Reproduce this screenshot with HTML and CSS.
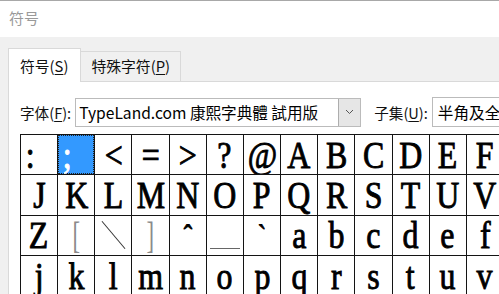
FILE: index.html
```html
<!DOCTYPE html>
<html lang="zh-CN">
<head>
  <meta charset="UTF-8">
  <title>符号</title>
  <link rel="stylesheet" href="styles.css">
</head>
<body>
  <div class="titlebar">符号</div>

  <div class="tabs">
    <div class="tab active">符号(<u>S</u>)</div>
    <div class="tab">特殊字符(<u>P</u>)</div>
  </div>

  <div class="panel">
    <div class="font-row">
      <span class="label">字体(<u>F</u>):</span>
      <div class="combo">
        <span class="combo-text">TypeLand.com 康熙字典體 試用版</span>
        <span class="combo-btn">
          <svg width="9" height="6" viewBox="0 0 9 6"><path d="M1 1 L4.5 4.5 L8 1" fill="none" stroke="#555" stroke-width="1"/></svg>
        </span>
      </div>
      <span class="label subset-label">子集(<u>U</u>):</span>
      <div class="subset">半角及全角字符</div>
    </div>

    <div class="grid">
      <div class="cell l"><span>:</span></div>
      <div class="cell l selected"><span>;</span></div>
      <div class="cell"><span>&lt;</span></div>
      <div class="cell"><span>=</span></div>
      <div class="cell"><span>&gt;</span></div>
      <div class="cell"><span>?</span></div>
      <div class="cell"><span>@</span></div>
      <div class="cell"><span>A</span></div>
      <div class="cell"><span>B</span></div>
      <div class="cell"><span>C</span></div>
      <div class="cell"><span>D</span></div>
      <div class="cell"><span>E</span></div>
      <div class="cell"><span>F</span></div>
      <div class="cell"><span>G</span></div>
      <div class="cell"><span>H</span></div>
      <div class="cell"><span>I</span></div>

      <div class="cell"><span>J</span></div>
      <div class="cell"><span>K</span></div>
      <div class="cell"><span>L</span></div>
      <div class="cell"><span>M</span></div>
      <div class="cell"><span>N</span></div>
      <div class="cell"><span>O</span></div>
      <div class="cell"><span>P</span></div>
      <div class="cell"><span>Q</span></div>
      <div class="cell"><span>R</span></div>
      <div class="cell"><span>S</span></div>
      <div class="cell"><span>T</span></div>
      <div class="cell"><span>U</span></div>
      <div class="cell"><span>V</span></div>
      <div class="cell"><span>W</span></div>
      <div class="cell"><span>X</span></div>
      <div class="cell"><span>Y</span></div>

      <div class="cell"><span>Z</span></div>
      <div class="cell thin"><span>[</span></div>
      <div class="cell"><i class="slash"></i></div>
      <div class="cell thin"><span>]</span></div>
      <div class="cell caret"><span>ˆ</span></div>
      <div class="cell"><i class="under"></i></div>
      <div class="cell caret"><span>`</span></div>
      <div class="cell"><span>a</span></div>
      <div class="cell"><span>b</span></div>
      <div class="cell"><span>c</span></div>
      <div class="cell"><span>d</span></div>
      <div class="cell"><span>e</span></div>
      <div class="cell"><span>f</span></div>
      <div class="cell"><span>g</span></div>
      <div class="cell"><span>h</span></div>
      <div class="cell"><span>i</span></div>

      <div class="cell"><span>j</span></div>
      <div class="cell"><span>k</span></div>
      <div class="cell"><span>l</span></div>
      <div class="cell"><span>m</span></div>
      <div class="cell"><span>n</span></div>
      <div class="cell"><span>o</span></div>
      <div class="cell"><span>p</span></div>
      <div class="cell"><span>q</span></div>
      <div class="cell"><span>r</span></div>
      <div class="cell"><span>s</span></div>
      <div class="cell"><span>t</span></div>
      <div class="cell"><span>u</span></div>
      <div class="cell"><span>v</span></div>
      <div class="cell"><span>w</span></div>
      <div class="cell"><span>x</span></div>
      <div class="cell"><span>y</span></div>
    </div>
  </div>
</body>
</html>
```

FILE: styles.css
```css
body {
  margin: 0;
  background-color: #f0f0f0;
  font-family: "Noto Sans CJK SC", "Noto Sans", sans-serif;
  overflow: hidden;
  width: 499px;
  height: 294px;
}
u {
  text-decoration-thickness: 1px;
  text-underline-offset: 2px;
}
.titlebar {
  height: 36px;
  background-color: white;
  border-top: 1px solid #a8a8a8;
  color: #9a9a9a;
  font-size: 15px;
  line-height: 34px;
  padding-left: 9px;
}
.tabs {
  display: flex;
  align-items: flex-end;
  padding: 11px 0 0 8px;
  height: 33px;
}
.tab {
  font-size: 14.8px;
  height: 29px;
  line-height: 28px;
  padding: 0 10px 0 10px;
  border: 1px solid #d9d9d9;
  border-bottom: none;
  border-left: none;
  background-color: #f0f0f0;
  color: #111;
}
.tab.active {
  height: 33px;
  line-height: 33px;
  background-color: white;
  border-left: 1px solid #d9d9d9;
  padding: 0 12px 0 11px;
  position: relative;
  top: 1px;
}
.panel {
  margin-left: 8px;
  background-color: white;
  border-top: 1px solid #d9d9d9;
  border-left: 1px solid #d9d9d9;
  height: 300px;
  padding: 15px 0 0 11px;
}
.font-row {
  display: flex;
  align-items: center;
  height: 30px;
  white-space: nowrap;
}
.font-row > * {
  flex: none;
}
.label {
  font-size: 14.6px;
  color: #111;
  margin-right: 4px;
}
.combo {
  display: flex;
  width: 286px;
  height: 29px;
  border: 1px solid #bbb;
  box-sizing: border-box;
}
.combo-text {
  flex: 1;
  font-size: 15.6px;
  line-height: 27px;
  padding-left: 3px;
  color: #000;
  overflow: hidden;
}
.combo-btn {
  width: 21px;
  background-color: #e6e6e6;
  border-left: 1px solid #adadad;
  display: flex;
  align-items: center;
  justify-content: center;
}
.subset-label {
  margin-left: 13px;
}
.subset {
  height: 30px;
  box-sizing: border-box;
  border: 1px solid #bbb;
  border-right: none;
  font-size: 15.6px;
  line-height: 28px;
  padding-left: 5px;
  color: #000;
  width: 120px;
  overflow: hidden;
}
.grid {
  display: grid;
  grid-template-columns: repeat(16, 36.17px);
  grid-auto-rows: 39.33px;
  gap: 1px;
  background-color: #141414;
  border: 1px solid #141414;
  width: max-content;
  margin-top: 7px;
}
.cell {
  background-color: white;
  display: flex;
  align-items: center;
  justify-content: center;
  font-family: "Liberation Serif", serif;
  font-size: 38px;
  color: #000;
  overflow: hidden;
  line-height: 1;
}
.cell span {
  display: inline-block;
  transform: scaleX(0.84);
  -webkit-text-stroke: 0.9px currentColor;
}
.cell.l {
  justify-content: flex-start;
  padding-left: 4px;
}
.cell.selected {
  background-color: #3399ff;
  color: white;
  outline: 1px dotted #222;
  outline-offset: -1px;
}
.cell.thin span {
  color: #8a8a8a;
  -webkit-text-stroke: 0;
  transform: scaleX(0.6);
}
.cell.caret {
  font-size: 30px;
  align-items: flex-start;
  padding-top: 4px;
  box-sizing: border-box;
}
.slash {
  width: 1px;
  height: 36px;
  background-color: #333;
  transform: rotate(-40deg);
}
.under {
  width: 30px;
  height: 1px;
  background-color: #666;
  align-self: flex-end;
  margin-bottom: 6px;
}
```
